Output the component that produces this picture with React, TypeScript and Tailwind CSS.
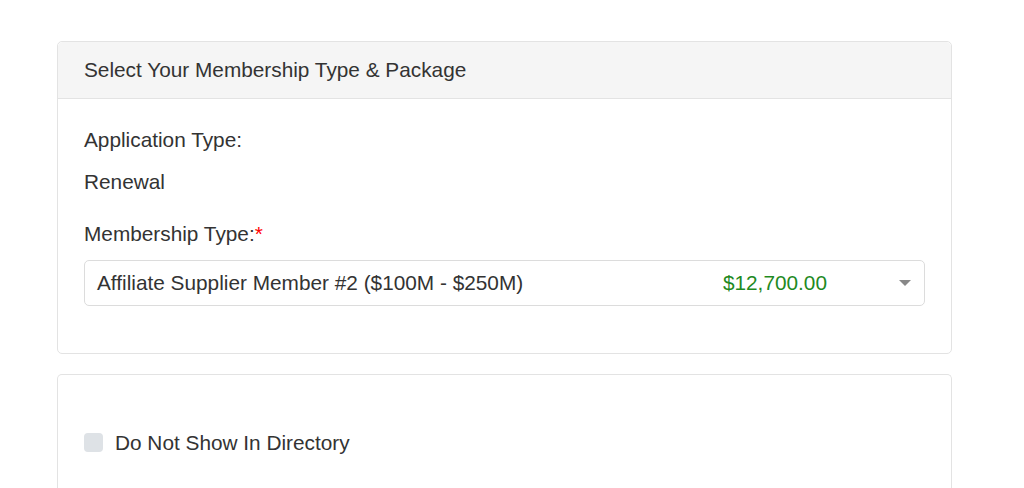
import React from "react";

const App: React.FC = () => {
  return (
    <div className="h-[488px] overflow-hidden bg-white px-[57px] pt-[41px] text-[#333] font-['Liberation_Sans',Arial,sans-serif] text-[20.8px]">
      {/* Membership card */}
      <div className="w-[895px] rounded-[5px] border border-[#e3e3e3] bg-white">
        <div className="h-[57px] flex items-center px-[26px] bg-[#f5f5f5] border-b border-[#e3e3e3] rounded-t-[5px]">
          Select Your Membership Type &amp; Package
        </div>
        <div className="px-[26px] pt-[29px] pb-[47px]">
          <div className="leading-[24px]">Application Type:</div>
          <div className="mt-[18px] leading-[24px]">Renewal</div>
          <div className="mt-[28px] leading-[24px]">
            Membership Type:<span className="text-[#ff0000]">*</span>
          </div>
          <div className="mt-[14px] h-[46px] flex items-center rounded-[5px] border border-[#dcdcdc] pl-[12px] pr-[12px]">
            <span className="flex-1">Affiliate Supplier Member #2 ($100M - $250M)</span>
            <span className="text-[#1f8a1f] mr-[72px]">$12,700.00</span>
            <svg width="12" height="7" viewBox="0 0 12 7" className="mr-[1px]">
              <path d="M0 0h12L6 6z" fill="#888" />
            </svg>
          </div>
        </div>
      </div>

      {/* Directory card */}
      <div className="mt-[20px] w-[895px] h-[130px] rounded-t-[5px] border border-b-0 border-[#e3e3e3] bg-white px-[26px] pt-[52px]">
        <label className="flex items-center gap-[12px]">
          <span className="w-[19px] h-[19px] rounded-[4px] bg-[#dee2e6]"></span>
          <span>Do Not Show In Directory</span>
        </label>
      </div>
    </div>
  );
};

export default App;
